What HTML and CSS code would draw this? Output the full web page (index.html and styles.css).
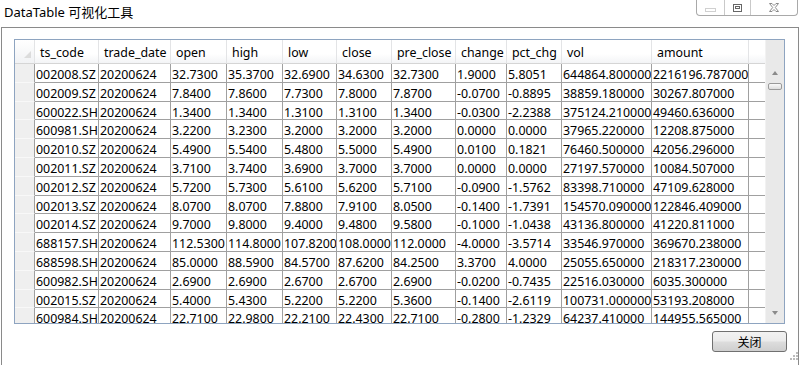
FILE: index.html
```html
<!DOCTYPE html>
<html>
<head>
<meta charset="utf-8">
<link rel="stylesheet" href="styles.css">
</head>
<body>
<div class="titlebar">
  <div class="title">DataTable 可视化工具</div>
  <div class="winbtns">
    <div class="wb wb-min"><span class="min-ico"></span></div>
    <div class="wb wb-max"><span class="max-ico"><span></span></span></div>
    <div class="wb wb-close">
      <svg width="10" height="9" viewBox="0 0 10 9"><path d="M0.5 0.5h2.5l2 2 2-2h2.5l-3.2 4 3.2 4h-2.5l-2-2-2 2h-2.5l3.2-4z" fill="#fff" stroke="#8a8a8a" stroke-width="1"/></svg>
    </div>
  </div>
</div>
<div class="frame">
  <div class="grid">
    <div class="table">
      <div class="row hrow">
        <div class="c rh corner"><span class="tri"></span></div>
        <div class="c w1 h">ts_code</div>
        <div class="c w2 h">trade_date</div>
        <div class="c w3 h">open</div>
        <div class="c w4 h">high</div>
        <div class="c w5 h">low</div>
        <div class="c w6 h">close</div>
        <div class="c w7 h">pre_close</div>
        <div class="c w8 h">change</div>
        <div class="c w9 h">pct_chg</div>
        <div class="c w10 h">vol</div>
        <div class="c w11 h">amount</div>
        <div class="c wx h"></div>
      </div>
      <div class="row"><div class="c rh"></div><div class="c w1">002008.SZ</div><div class="c w2">20200624</div><div class="c w3">32.7300</div><div class="c w4">35.3700</div><div class="c w5">32.6900</div><div class="c w6">34.6300</div><div class="c w7">32.7300</div><div class="c w8">1.9000</div><div class="c w9">5.8051</div><div class="c w10">644864.800000</div><div class="c w11">2216196.787000</div><div class="c wx"></div></div>
      <div class="row"><div class="c rh"></div><div class="c w1">002009.SZ</div><div class="c w2">20200624</div><div class="c w3">7.8400</div><div class="c w4">7.8600</div><div class="c w5">7.7300</div><div class="c w6">7.8000</div><div class="c w7">7.8700</div><div class="c w8">-0.0700</div><div class="c w9">-0.8895</div><div class="c w10">38859.180000</div><div class="c w11">30267.807000</div><div class="c wx"></div></div>
      <div class="row"><div class="c rh"></div><div class="c w1">600022.SH</div><div class="c w2">20200624</div><div class="c w3">1.3400</div><div class="c w4">1.3400</div><div class="c w5">1.3100</div><div class="c w6">1.3100</div><div class="c w7">1.3400</div><div class="c w8">-0.0300</div><div class="c w9">-2.2388</div><div class="c w10">375124.210000</div><div class="c w11">49460.636000</div><div class="c wx"></div></div>
      <div class="row"><div class="c rh"></div><div class="c w1">600981.SH</div><div class="c w2">20200624</div><div class="c w3">3.2200</div><div class="c w4">3.2300</div><div class="c w5">3.2000</div><div class="c w6">3.2000</div><div class="c w7">3.2000</div><div class="c w8">0.0000</div><div class="c w9">0.0000</div><div class="c w10">37965.220000</div><div class="c w11">12208.875000</div><div class="c wx"></div></div>
      <div class="row"><div class="c rh"></div><div class="c w1">002010.SZ</div><div class="c w2">20200624</div><div class="c w3">5.4900</div><div class="c w4">5.5400</div><div class="c w5">5.4800</div><div class="c w6">5.5000</div><div class="c w7">5.4900</div><div class="c w8">0.0100</div><div class="c w9">0.1821</div><div class="c w10">76460.500000</div><div class="c w11">42056.296000</div><div class="c wx"></div></div>
      <div class="row"><div class="c rh"></div><div class="c w1">002011.SZ</div><div class="c w2">20200624</div><div class="c w3">3.7100</div><div class="c w4">3.7400</div><div class="c w5">3.6900</div><div class="c w6">3.7000</div><div class="c w7">3.7000</div><div class="c w8">0.0000</div><div class="c w9">0.0000</div><div class="c w10">27197.570000</div><div class="c w11">10084.507000</div><div class="c wx"></div></div>
      <div class="row"><div class="c rh"></div><div class="c w1">002012.SZ</div><div class="c w2">20200624</div><div class="c w3">5.7200</div><div class="c w4">5.7300</div><div class="c w5">5.6100</div><div class="c w6">5.6200</div><div class="c w7">5.7100</div><div class="c w8">-0.0900</div><div class="c w9">-1.5762</div><div class="c w10">83398.710000</div><div class="c w11">47109.628000</div><div class="c wx"></div></div>
      <div class="row"><div class="c rh"></div><div class="c w1">002013.SZ</div><div class="c w2">20200624</div><div class="c w3">8.0700</div><div class="c w4">8.0700</div><div class="c w5">7.8800</div><div class="c w6">7.9100</div><div class="c w7">8.0500</div><div class="c w8">-0.1400</div><div class="c w9">-1.7391</div><div class="c w10">154570.090000</div><div class="c w11">122846.409000</div><div class="c wx"></div></div>
      <div class="row"><div class="c rh"></div><div class="c w1">002014.SZ</div><div class="c w2">20200624</div><div class="c w3">9.7000</div><div class="c w4">9.8000</div><div class="c w5">9.4000</div><div class="c w6">9.4800</div><div class="c w7">9.5800</div><div class="c w8">-0.1000</div><div class="c w9">-1.0438</div><div class="c w10">43136.800000</div><div class="c w11">41220.811000</div><div class="c wx"></div></div>
      <div class="row"><div class="c rh"></div><div class="c w1">688157.SH</div><div class="c w2">20200624</div><div class="c w3">112.5300</div><div class="c w4">114.8000</div><div class="c w5">107.8200</div><div class="c w6">108.0000</div><div class="c w7">112.0000</div><div class="c w8">-4.0000</div><div class="c w9">-3.5714</div><div class="c w10">33546.970000</div><div class="c w11">369670.238000</div><div class="c wx"></div></div>
      <div class="row"><div class="c rh"></div><div class="c w1">688598.SH</div><div class="c w2">20200624</div><div class="c w3">85.0000</div><div class="c w4">88.5900</div><div class="c w5">84.5700</div><div class="c w6">87.6200</div><div class="c w7">84.2500</div><div class="c w8">3.3700</div><div class="c w9">4.0000</div><div class="c w10">25055.650000</div><div class="c w11">218317.230000</div><div class="c wx"></div></div>
      <div class="row"><div class="c rh"></div><div class="c w1">600982.SH</div><div class="c w2">20200624</div><div class="c w3">2.6900</div><div class="c w4">2.6900</div><div class="c w5">2.6700</div><div class="c w6">2.6700</div><div class="c w7">2.6900</div><div class="c w8">-0.0200</div><div class="c w9">-0.7435</div><div class="c w10">22516.030000</div><div class="c w11">6035.300000</div><div class="c wx"></div></div>
      <div class="row"><div class="c rh"></div><div class="c w1">002015.SZ</div><div class="c w2">20200624</div><div class="c w3">5.4000</div><div class="c w4">5.4300</div><div class="c w5">5.2200</div><div class="c w6">5.2200</div><div class="c w7">5.3600</div><div class="c w8">-0.1400</div><div class="c w9">-2.6119</div><div class="c w10">100731.000000</div><div class="c w11">53193.208000</div><div class="c wx"></div></div>
      <div class="row"><div class="c rh"></div><div class="c w1">600984.SH</div><div class="c w2">20200624</div><div class="c w3">22.7100</div><div class="c w4">22.9800</div><div class="c w5">22.2100</div><div class="c w6">22.4300</div><div class="c w7">22.7100</div><div class="c w8">-0.2800</div><div class="c w9">-1.2329</div><div class="c w10">64237.410000</div><div class="c w11">144955.565000</div><div class="c wx"></div></div>
    </div>
    <div class="scroll">
      <span class="arr up"></span>
      <span class="thumb"></span>
      <span class="spacer"></span>
      <span class="arr down"></span>
    </div>
  </div>
  <div class="actions">
    <button class="btn">关闭</button>
  </div>
</div>
<div class="grip">
  <svg width="10" height="10" viewBox="0 0 10 10">
    <rect x="8" y="0" width="2" height="2" fill="#bcbcbc"/>
    <rect x="5" y="3" width="2" height="2" fill="#bcbcbc"/><rect x="8" y="3" width="2" height="2" fill="#bcbcbc"/>
    <rect x="2" y="6" width="2" height="2" fill="#bcbcbc"/><rect x="5" y="6" width="2" height="2" fill="#bcbcbc"/><rect x="8" y="6" width="2" height="2" fill="#bcbcbc"/>
  </svg>
</div>
</body>
</html>
```
FILE: styles.css
```css
* { box-sizing: border-box; }
body {
  margin: 0;
  width: 802px;
  height: 365px;
  background: #fff;
  font-family: "Noto Sans", "Noto Sans CJK SC", sans-serif;
  color: #000;
  position: relative;
  overflow: hidden;
}
.titlebar {
  height: 27px;
  display: flex;
  justify-content: space-between;
  align-items: flex-start;
}
.title {
  font-size: 13px;
  padding: 3px 0 0 4px;
  line-height: 18px;
}
.winbtns {
  display: flex;
  margin-right: 4px;
  height: 17px;
  margin-top: -1px;
  border: 1px solid #a9a9a9;
  border-top: none;
  border-radius: 0 0 4px 4px;
}
.wb {
  display: flex;
  align-items: center;
  justify-content: center;
  border-left: 1px solid #c9c9c9;
  padding-top: 1px;
}
.wb-min { width: 27px; border-left: none; }
.wb-max { width: 26px; }
.wb-close { width: 47px; }
.min-ico {
  width: 11px;
  height: 4px;
  border: 1px solid #d0d0d0;
  margin-top: 5px;
}
.max-ico {
  width: 9px;
  height: 8px;
  border: 1px solid #666;
  display: flex;
  align-items: center;
  justify-content: center;
}
.max-ico span {
  width: 5px;
  height: 3px;
  border: 1px solid #666;
}
.frame {
  margin-left: 1px;
  width: 798px;
  height: 338px;
  border: 1px solid #8a8a8a;
  border-bottom: none;
  padding: 11px 11px 0 12px;
}
.grid {
  width: 771px;
  height: 285px;
  border: 1px solid #8ea4c0;
  display: flex;
}
.table {
  width: 750px;
  overflow: hidden;
  font-size: 12.4px;
}
.row {
  display: flex;
  height: 18.8px;
}
.c {
  flex: none;
  height: 100%;
  border-right: 1px solid #a0a0a0;
  border-bottom: 1px solid #a0a0a0;
  padding: 2px 0 0 1px;
  white-space: nowrap;
  overflow: hidden;
  line-height: 17px;
}
.rh {
  width: 20px;
  background: #efefef;
  border-bottom: 1px solid #f8f8f8;
  border-right: 1px solid #a0a0a0;
}
.w1 { width: 64px; }
.w2 { width: 72px; }
.w3 { width: 56px; }
.w4 { width: 56px; }
.w5 { width: 54px; }
.w6 { width: 55px; }
.w7 { width: 64px; }
.w8 { width: 51px; }
.w9 { width: 55px; }
.w10 { width: 90px; }
.w11 { width: 97px; }
.wx { width: 16px; border-right: none; }
.hrow { height: 24px; }
.hrow .c {
  background: linear-gradient(#ffffff, #ffffff 60%, #f3f4f6);
  border-right: 1px solid #e3e4e6;
  border-bottom: 1px solid #d5d5d5;
  padding: 2px 0 0 5px;
  line-height: 21px;
}
.hrow .wx { border-right: none; }
.hrow .corner {
  background: linear-gradient(#ffffff, #f1f2f4);
  position: relative;
}
.tri {
  position: absolute;
  right: 3px;
  bottom: 5px;
  width: 0;
  height: 0;
  border-left: 7px solid transparent;
  border-bottom: 7px solid #dcdcdc;
}
.scroll {
  width: 19px;
  background: #e9e9e9;
  border-left: 1px solid #f2f2f2;
  display: flex;
  flex-direction: column;
  align-items: center;
  padding: 31px 0 8px;
}
.arr {
  width: 0;
  height: 0;
  border-left: 3px solid transparent;
  border-right: 3px solid transparent;
}
.up { border-bottom: 4px solid #8a8a8a; }
.down { border-top: 4px solid #8a8a8a; }
.thumb {
  margin-top: 8px;
  width: 14px;
  height: 7px;
  border: 1px solid #9a9a9a;
  border-radius: 2px;
  background: linear-gradient(#fafafa, #dedede);
}
.spacer { flex: 1; }
.actions {
  display: flex;
  justify-content: flex-end;
  margin-top: 7px;
}
.btn {
  width: 75px;
  height: 21px;
  border: 1px solid #707070;
  border-radius: 3px;
  background: linear-gradient(#f2f2f2, #ebebeb 48%, #dddddd 52%, #cfcfcf);
  font-family: "Noto Sans CJK SC", sans-serif;
  font-size: 12px;
  line-height: 17px;
  padding: 0;
  color: #000;
}
.grip {
  position: absolute;
  right: 4px;
  bottom: 3px;
  width: 10px;
  height: 10px;
  display: flex;
}
```
